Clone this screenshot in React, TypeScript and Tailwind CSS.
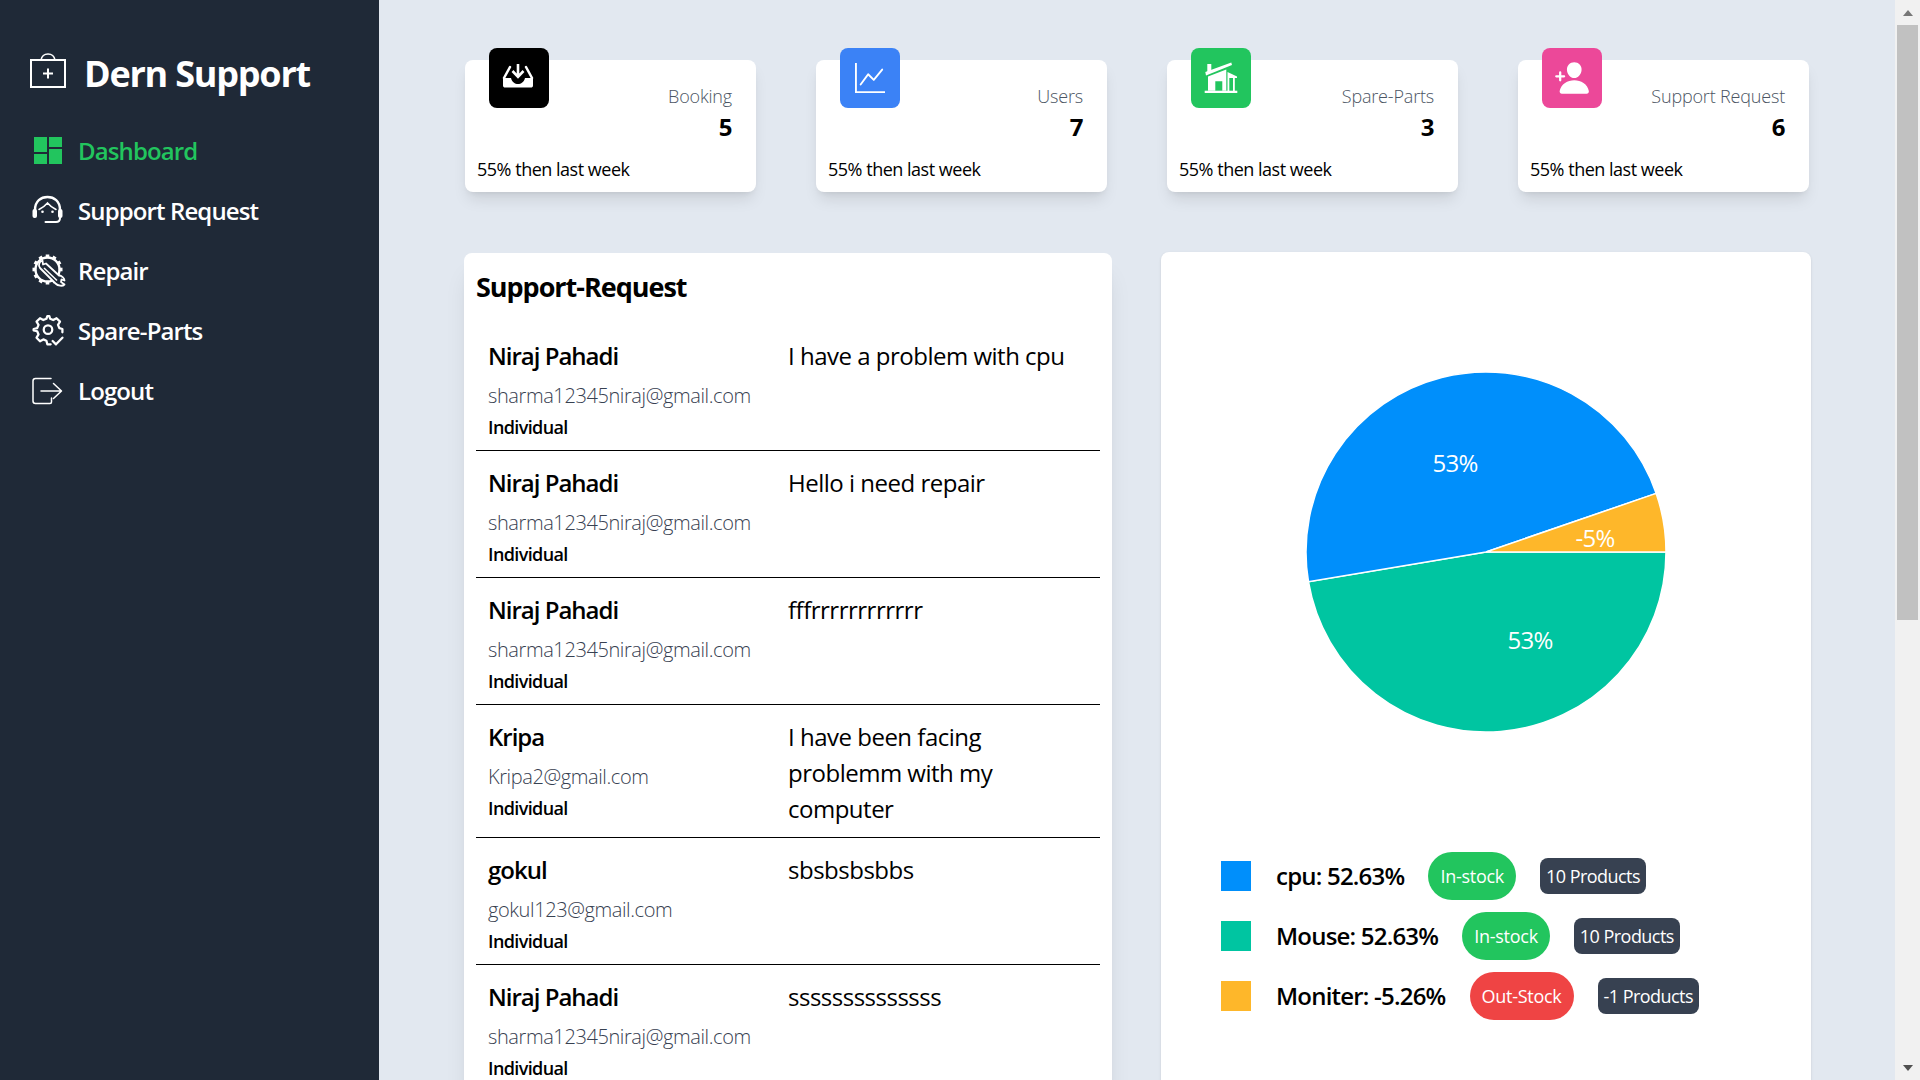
import React from "react";
import { BsGraphUp } from "react-icons/bs";
import { IoPersonAdd } from "react-icons/io5";

const FONT = "font-['Open_Sans','Noto_Sans',sans-serif] tracking-[-0.031em]";

function LogoIcon() {
  return (
    <svg width="38" height="36" viewBox="0 0 38 36" fill="none" stroke="white" className="shrink-0">
      <rect x="1" y="7" width="34" height="27" strokeWidth="2" />
      <path d="M11 7 C12 2 15 1 18 1 C21 1 24 2 25 7" strokeWidth="1.5" />
      <path d="M13 20.5 H23 M18 15.5 V25.5" strokeWidth="2" />
    </svg>
  );
}
function DashIcon() {
  return (
    <svg width="30" height="30" viewBox="0 0 30 30" fill="#22c55e" className="shrink-0">
      <rect x="2" y="1" width="13" height="15" />
      <rect x="2" y="18" width="13" height="10" />
      <rect x="17" y="1" width="13" height="10" />
      <rect x="17" y="13" width="13" height="15" />
    </svg>
  );
}
function AgentIcon() {
  return (
    <svg width="32" height="32" viewBox="0 0 32 32" fill="none" stroke="white" strokeWidth="2.4" strokeLinecap="round" className="shrink-0">
      <path d="M3 15 C3 6 9 2 15.5 2 C22 2 28 6 28 15" />
      <rect x="0.5" y="14" width="4.5" height="9" rx="2" fill="white" stroke="none" />
      <rect x="26" y="14" width="4.5" height="9" rx="2" fill="white" stroke="none" />
      <path d="M7 14.5 C10 13 13 11 15.5 8 C18 11 21 13 24 14.5" strokeWidth="1.6" />
      <path d="M28 23 C28 26 26 27 24 27 H13.5" strokeWidth="2" />
      <circle cx="10.5" cy="16.7" r="1.3" fill="white" stroke="none" />
      <circle cx="20.5" cy="16.7" r="1.3" fill="white" stroke="none" />
    </svg>
  );
}
function RepairIcon() {
  const teeth = Array.from({ length: 12 }, (_, i) => i * 30);
  return (
    <svg width="34" height="34" viewBox="0 0 34 34" fill="none" stroke="white" className="shrink-0">
      <circle cx="15.5" cy="15.5" r="12" strokeWidth="2.4" />
      {teeth.map((a) => (
        <rect key={a} x="13.7" y="0.5" width="3.6" height="3.6" fill="white" stroke="none" transform={`rotate(${a} 15.5 15.5)`} />
      ))}
      <path d="M10.5 6.5 C7 7.5 6 11.5 8 14 L23.5 29.5 C26 32 30.5 32.5 32.5 30.5 L29 28 L29.5 25.5 L32.5 26.5 C32.5 24 29.5 21.5 27 21.5 L14 9.5 L11 10.5 Z" strokeWidth="1.8" strokeLinejoin="round" fill="#1f2937" />
      <path d="M12 14 L25 26.5" strokeWidth="1.5" />
    </svg>
  );
}
function SpareIcon() {
  return (
    <svg width="32" height="32" viewBox="0 0 24 24" fill="none" stroke="white" strokeWidth="1.7" strokeLinejoin="round" strokeLinecap="round" className="shrink-0">
      <path d="M14 22 H11.5 L10.8 19.3 L8.5 18.3 L6 19.7 L3.4 17 L4.9 14.6 L3.9 12.2 L1.2 11.5 V10.5 L3.9 9.8 L4.9 7.4 L3.4 5 L6 2.4 L8.5 3.8 L10.8 2.8 L11.5 0.9 H13 L13.6 2.8 L15.9 3.8 L18.4 2.4 L21 5 L19.5 7.4 L20.5 9.8 L22.8 10.5 V13" />
      <circle cx="12" cy="11" r="3.2" />
      <path d="M15.5 19.5 L18 22 L22.8 17" />
    </svg>
  );
}
function LogoutIcon() {
  return (
    <svg width="32" height="28" viewBox="0 0 32 28" fill="none" stroke="white" strokeWidth="1.5" strokeLinecap="round" strokeLinejoin="round" className="shrink-0">
      <path d="M19 1.5 H3.5 C2 1.5 1 2.5 1 4 V24 C1 25.5 2 26.5 3.5 26.5 H18 C19 26.5 19.5 26 19.5 25 V21" />
      <path d="M9 14 H29 M21.5 6.5 L29.5 14 L21.5 21.5" />
    </svg>
  );
}
function InboxIcon() {
  return (
    <svg width="34" height="34" viewBox="0 0 34 34" fill="white" className="block">
      <path d="M8 6 L2 17 M24 6 L30 17" stroke="white" strokeWidth="2.5" strokeLinecap="round" fill="none" />
      <path d="M1 17 H9 C10 21 13 23 16 23 C19 23 22 21 23 17 H31 V24.5 C31 26 30 26.5 29 26.5 H3 C2 26.5 1 26 1 24.5 Z" />
      <path d="M16 3 V15 M10.5 10 L16 15.8 L21.5 10" stroke="white" strokeWidth="2.6" fill="none" />
    </svg>
  );
}
function HouseIcon() {
  return (
    <svg width="38" height="38" viewBox="0 0 38 38" fill="white" className="block">
      <rect x="5.3" y="5" width="4" height="8.5" />
      <path d="M3.3 13 L29.3 3.5 L30 6 L4 16.5 Z" />
      <path d="M6 17.5 L24.3 10.5 V31.7 H6 Z M13.3 22.3 V31.7 H20.3 V22.3 Z" fillRule="evenodd" />
      <path d="M25.5 13 L35 17.5 V19 H25.5 Z" />
      <rect x="25.5" y="19" width="1.8" height="13" />
      <rect x="31" y="19" width="1.8" height="13" />
      <rect x="2.7" y="31.7" width="32.6" height="2.3" />
    </svg>
  );
}

const nav = [
  { label: "Dashboard", icon: <DashIcon />, active: true },
  { label: "Support Request", icon: <AgentIcon /> },
  { label: "Repair", icon: <RepairIcon /> },
  { label: "Spare-Parts", icon: <SpareIcon /> },
  { label: "Logout", icon: <LogoutIcon /> },
];

const cards = [
  { label: "Booking", value: 5, bg: "bg-black", icon: <InboxIcon /> },
  { label: "Users", value: 7, bg: "bg-[#3b82f6]", icon: <BsGraphUp size={30} color="white" /> },
  { label: "Spare-Parts", value: 3, bg: "bg-[#22c55e]", icon: <HouseIcon /> },
  { label: "Support Request", value: 6, bg: "bg-[#ec4899]", icon: <IoPersonAdd size={36} color="white" /> },
];

const rows = [
  { name: "Niraj Pahadi", email: "sharma12345niraj@gmail.com", msg: "I have a problem with cpu" },
  { name: "Niraj Pahadi", email: "sharma12345niraj@gmail.com", msg: "Hello i need repair" },
  { name: "Niraj Pahadi", email: "sharma12345niraj@gmail.com", msg: "fffrrrrrrrrrrrr" },
  { name: "Kripa", email: "Kripa2@gmail.com", msg: "I have been facing problemm with my computer" },
  { name: "gokul", email: "gokul123@gmail.com", msg: "sbsbsbsbbs" },
  { name: "Niraj Pahadi", email: "sharma12345niraj@gmail.com", msg: "ssssssssssssss" },
];

const legend = [
  { label: "cpu: 52.63%", color: "bg-[#008ffb]", stock: "In-stock", stockBg: "bg-[#22c55e]", count: "10 Products" },
  { label: "Mouse: 52.63%", color: "bg-[#00c5a1]", stock: "In-stock", stockBg: "bg-[#22c55e]", count: "10 Products" },
  { label: "Moniter: -5.26%", color: "bg-[#feb72a]", stock: "Out-Stock", stockBg: "bg-[#ef4444]", count: "-1 Products" },
];

function Pie() {
  const r = 180;
  const c = 181;
  const pt = (deg: number) => {
    const a = (deg * Math.PI) / 180;
    return `${c + r * Math.cos(a)} ${c + r * Math.sin(a)}`;
  };
  const slice = (from: number, to: number, fill: string) => (
    <path d={`M${c} ${c} L${pt(from)} A${r} ${r} 0 0 1 ${pt(to)} Z`} fill={fill} stroke="white" strokeWidth="1.5" />
  );
  const text = { fill: "white", fontSize: 24, textAnchor: "middle" as const, fontFamily: "'Open Sans', sans-serif", letterSpacing: "-0.03em" };
  return (
    <svg width="362" height="362" viewBox="0 0 362 362" className="block">
      {slice(0, 170.5, "#00c5a1")}
      {slice(170.5, 341, "#008ffb")}
      {slice(341, 360, "#feb72a")}
      <text x="150" y="101" {...text}>53%</text>
      <text x="225" y="278" {...text}>53%</text>
      <text x="290" y="176" {...text}>-5%</text>
    </svg>
  );
}

function FakeScrollbar() {
  return (
    <div className="fixed right-0 top-0 flex h-screen w-[25px] flex-col bg-[#f1f1f1]">
      <div className="flex h-[25px] items-center justify-center">
        <span className="h-0 w-0 border-x-[5.5px] border-b-[6px] border-x-transparent border-b-[#777777]" />
      </div>
      <div className="flex-1 px-[2px]">
        <div className="h-[595px] w-full bg-[#c1c1c1]" />
      </div>
      <div className="flex h-[25px] items-center justify-center">
        <span className="h-0 w-0 border-x-[5.5px] border-t-[6px] border-x-transparent border-t-[#505050]" />
      </div>
    </div>
  );
}

export default function App() {
  return (
    <div className={`flex min-h-screen bg-[#e2e8f0] ${FONT}`}>
      <aside className="w-[379px] shrink-0 bg-[#1f2937] pt-[53px]">
        <div className="flex h-9 items-center pl-[30px]">
          <LogoIcon />
          <span className="ml-[16px] mt-[6px] text-[36px] font-bold leading-9 tracking-[-0.034em] text-white">Dern Support</span>
        </div>
        <nav className="mt-[32px] flex flex-col pl-[32px]">
          {nav.map((n) => (
            <div key={n.label} className="flex h-[60px] items-center">
              <span className="flex w-[46px] items-center">{n.icon}</span>
              <span className={`text-2xl font-semibold tracking-[-0.037em] ${n.active ? "text-[#22c55e]" : "text-white"}`}>{n.label}</span>
            </div>
          ))}
        </nav>
      </aside>
      <main className="min-w-0 flex-1 pb-[40px] pl-[86px] pr-[25px] pt-[60px]">
        <div className="grid grid-cols-[repeat(4,291px)] gap-[60px]">
          {cards.map((c) => (
            <div key={c.label} className="relative h-[132px] rounded-lg bg-white px-3 shadow-lg">
              <div className={`absolute left-6 -top-3 flex h-[60px] w-[60px] items-center justify-center rounded-lg ${c.bg}`}>{c.icon}</div>
              <div className="flex h-[96px] flex-col items-end justify-start pr-3 pt-[23px]">
                <span className="text-lg font-light leading-[27px] tracking-[-0.01em] text-[#4b5563]">{c.label}</span>
                <span className="mt-px text-2xl font-bold leading-8 text-black">{c.value}</span>
              </div>
              <p className="text-lg leading-[27px] tracking-[-0.027em] text-black">55% then last week</p>
            </div>
          ))}
        </div>
        <div className="-ml-px mt-[60px] grid grid-cols-[648px_650px] gap-[49px]">
          <section className="mt-px rounded-lg bg-white px-3 pt-3 shadow-xl">
            <h2 className="text-[27px] font-bold leading-[44px] tracking-[-0.038em] text-black">Support-Request</h2>
            <div className="mt-[15px]">
              {rows.map((r, i) => (
                <div key={i} className="grid grid-cols-2 border-b border-black px-3 pb-[10px] pt-[14px] last:border-b-0">
                  <div className="flex flex-col">
                    <span className="text-2xl font-semibold leading-9 tracking-[-0.042em] text-black">{r.name}</span>
                    <span className="mt-[4px] text-xl font-light leading-[36px] tracking-[-0.02em] text-[#374151]">{r.email}</span>
                    <span className="text-lg font-semibold leading-[26px] tracking-[-0.034em] text-black">Individual</span>
                  </div>
                  <p className="text-2xl leading-9 text-black">{r.msg}</p>
                </div>
              ))}
            </div>
          </section>
          <section className="rounded-lg bg-white shadow-sm">
            <div className="mt-[119px] flex justify-center">
              <Pie />
            </div>
            <div className="mt-[113px] flex flex-col pl-[60px]">
              {legend.map((l) => (
                <div key={l.label} className="flex h-[60px] items-center">
                  <span className={`h-[30px] w-[30px] shrink-0 ${l.color}`} />
                  <span className="ml-[25px] text-2xl font-semibold leading-9 tracking-[-0.033em] text-black">{l.label}</span>
                  <span className={`ml-6 flex h-12 items-center rounded-3xl px-3 text-lg tracking-[-0.015em] text-white ${l.stockBg}`}>{l.stock}</span>
                  <span className="ml-6 flex h-9 items-center rounded-lg bg-[#374151] px-1.5 text-lg tracking-[-0.03em] text-white">{l.count}</span>
                </div>
              ))}
            </div>
          </section>
        </div>
      </main>
      <FakeScrollbar />
    </div>
  );
}
